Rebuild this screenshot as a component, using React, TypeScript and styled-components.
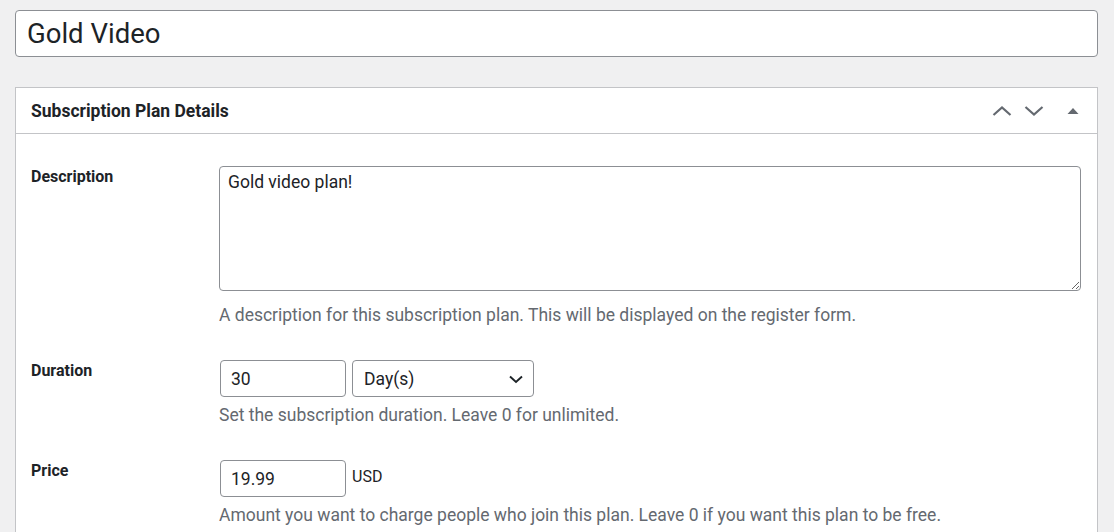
import React from "react";
import styled, { createGlobalStyle } from "styled-components";

const Global = createGlobalStyle`
  html, body { margin: 0; padding: 0; background: #f0f0f1; }
  body { font-family: Roboto, "Liberation Sans", sans-serif; color: #1d2327; }
  * { box-sizing: border-box; }
`;

const Page = styled.div`
  padding: 10px 16px 0 15px;
  display: flex;
  flex-direction: column;
  gap: 30px;
`;

const TitleInput = styled.input`
  width: 100%;
  height: 47px;
  border: 1px solid #8c8f94;
  border-radius: 4px;
  background: #fff;
  padding: 0 11px;
  font-family: Roboto, sans-serif;
  font-size: 27.5px;
  color: #1d2327;
  outline: none;
`;

const Postbox = styled.div`
  background: #fff;
  border: 1px solid #c3c4c7;
  border-bottom: 0;
`;

const PostboxHeader = styled.div`
  height: 46px;
  display: flex;
  align-items: center;
  justify-content: space-between;
  padding: 0 6px 0 15px;
  border-bottom: 1px solid #c3c4c7;
`;

const PostboxTitle = styled.h2`
  margin: 0;
  font-size: 17.5px;
  font-weight: 700;
  color: #1d2327;
`;

const HeaderActions = styled.div`
  display: flex;
  align-items: center;
  height: 100%;
`;

const HandleButton = styled.button<{ $shift?: number }>`
  width: 36px;
  height: 36px;
  border: 0;
  background: transparent;
  display: flex;
  align-items: center;
  justify-content: center;
  padding: 0;
  margin-left: ${(p) => p.$shift ?? 0}px;
  color: #646970;
`;

const Body = styled.div`
  padding: 32px 15px 20px 15px;
  display: flex;
  flex-direction: column;
  gap: 34px;
`;

const FieldRow = styled.div`
  display: grid;
  grid-template-columns: 188px 1fr;
  align-items: start;
`;

const Label = styled.label`
  font-size: 16px;
  line-height: 19px;
  font-weight: 700;
  color: #1d2327;
  padding-top: 1px;
`;

const FieldCol = styled.div<{ $gap: number }>`
  display: flex;
  flex-direction: column;
  gap: ${(p) => p.$gap}px;
`;

const TextArea = styled.textarea`
  display: block;
  width: 862px;
  height: 125px;
  border: 1px solid #8c8f94;
  border-radius: 4px;
  padding: 5px 8px;
  font-family: Roboto, sans-serif;
  font-size: 17.5px;
  color: #1d2327;
  resize: both;
  outline: none;
`;

const Help = styled.p`
  margin: 0;
  font-size: 17.5px;
  line-height: 21px;
  color: #646970;
`;

const Controls = styled.div`
  display: flex;
  align-items: flex-start;
  gap: 6px;
  padding-left: 1px;
`;

const SmallInput = styled.input`
  width: 126px;
  height: 37px;
  border: 1px solid #8c8f94;
  border-radius: 4px;
  padding: 0 10px;
  font-family: Roboto, sans-serif;
  font-size: 17.5px;
  color: #1d2327;
  outline: none;
  background: #fff;
`;

const SelectBox = styled.div`
  width: 182px;
  height: 37px;
  border: 1px solid #8c8f94;
  border-radius: 4px;
  padding: 0 9px 0 11px;
  display: flex;
  align-items: center;
  justify-content: space-between;
  font-size: 17.5px;
  color: #1d2327;
  background: #fff;
`;

const Currency = styled.span`
  font-size: 16px;
  color: #1d2327;
  padding-top: 7px;
`;

const ChevronUp = () => (
  <svg width="20" height="20" viewBox="0 0 20 20">
    <path d="M1.5 14 L10 6.5 L18.5 14" fill="none" stroke="currentColor" strokeWidth="2.2" />
  </svg>
);
const ChevronDown = () => (
  <svg width="20" height="20" viewBox="0 0 20 20">
    <path d="M1.5 6 L10 13.5 L18.5 6" fill="none" stroke="currentColor" strokeWidth="2.2" />
  </svg>
);
const Triangle = () => (
  <svg width="20" height="20" viewBox="0 0 20 20">
    <path d="M4.5 13 L10 7 L15.5 13 Z" fill="#646970" />
  </svg>
);
const SelectArrow = () => (
  <svg width="16" height="16" viewBox="0 0 16 16">
    <path d="M2 5.5 L8 11 L14 5.5" fill="none" stroke="#1d2327" strokeWidth="1.9" />
  </svg>
);

export default function App() {
  return (
    <>
      <Global />
      <Page>
        <TitleInput defaultValue="Gold Video" />
        <Postbox>
          <PostboxHeader>
            <PostboxTitle>Subscription Plan Details</PostboxTitle>
            <HeaderActions>
              <HandleButton><ChevronUp /></HandleButton>
              <HandleButton $shift={-4}><ChevronDown /></HandleButton>
              <HandleButton $shift={3}><Triangle /></HandleButton>
            </HeaderActions>
          </PostboxHeader>
          <Body>
            <FieldRow>
              <Label>Description</Label>
              <FieldCol $gap={14}>
                <TextArea defaultValue="Gold video plan!" />
                <Help>A description for this subscription plan. This will be displayed on the register form.</Help>
              </FieldCol>
            </FieldRow>
            <FieldRow>
              <Label>Duration</Label>
              <FieldCol $gap={8}>
                <Controls>
                  <SmallInput defaultValue="30" />
                  <SelectBox>
                    <span>Day(s)</span>
                    <SelectArrow />
                  </SelectBox>
                </Controls>
                <Help>Set the subscription duration. Leave 0 for unlimited.</Help>
              </FieldCol>
            </FieldRow>
            <FieldRow>
              <Label>Price</Label>
              <FieldCol $gap={8}>
                <Controls>
                  <SmallInput defaultValue="19.99" />
                  <Currency>USD</Currency>
                </Controls>
                <Help>Amount you want to charge people who join this plan. Leave 0 if you want this plan to be free.</Help>
              </FieldCol>
            </FieldRow>
          </Body>
        </Postbox>
      </Page>
    </>
  );
}
